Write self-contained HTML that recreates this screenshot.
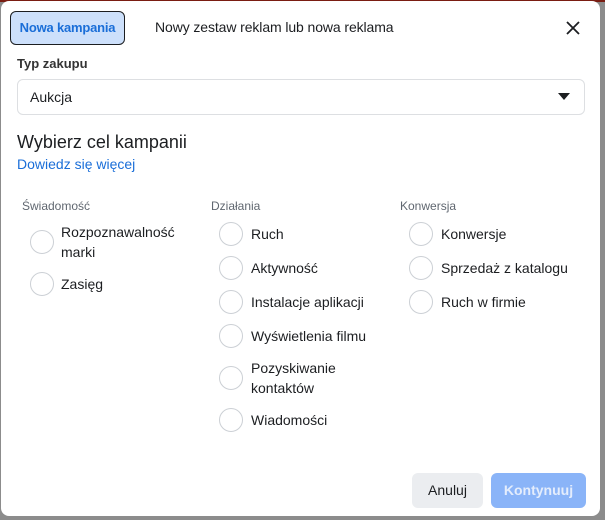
<!DOCTYPE html><html><head><style>
body{margin:0;width:605px;height:520px;background:#8c8c8c;font-family:"Liberation Sans",Arial,sans-serif;position:relative;overflow:hidden;color:#1c1e21}
.top{position:absolute;left:0;top:0;width:605px;height:2px;background:#7a1d12}
.m{position:absolute;left:1px;top:1px;width:599px;height:515px;background:#fff;border-radius:8px}
.a{position:absolute;white-space:nowrap}
.r{position:absolute;width:22px;height:22px;border:1px solid #ccd0d5;border-radius:50%;background:#fff}
.l{position:absolute;font-size:14px;line-height:20px;color:#1c1e21}
.h{position:absolute;font-size:12px;color:#606770}
</style></head><body>
<div class="top"></div>
<div class="m">
<div class="a" style="left:9px;top:10px;width:113px;height:32px;border:1.5px solid #1c1e21;border-radius:6px;background:#cde0fb;color:#1a6ed8;font-weight:bold;font-size:13px;letter-spacing:-0.2px;line-height:32px;text-align:center">Nowa kampania</div>
<div class="a" style="left:154px;top:18px;font-size:14px;letter-spacing:-0.1px">Nowy zestaw reklam lub nowa reklama</div>
<svg class="a" style="left:565px;top:20px" width="14" height="14"><path d="M1 1L13 13M13 1L1 13" stroke="#1c1e21" stroke-width="1.8"/></svg>
<div class="a" style="left:16px;top:55px;font-size:13px;font-weight:bold;color:#333">Typ zakupu</div>
<div class="a" style="left:16px;top:78px;width:566px;height:34px;border:1px solid #dddfe2;border-radius:6px"></div>
<div class="a" style="left:29px;top:88px;font-size:14px">Aukcja</div>
<svg class="a" style="left:557px;top:92px" width="12" height="7"><path d="M0 0H12L6 7Z" fill="#1c1e21"/></svg>
<div class="a" style="left:16px;top:131px;font-size:18px;color:#1c1e21">Wybierz cel kampanii</div>
<div class="a" style="left:16px;top:155px;font-size:14px;color:#1a6ed8">Dowiedz się więcej</div>
<div class="h" style="left:21px;top:198px">Świadomość</div>
<div class="h" style="left:210px;top:198px">Działania</div>
<div class="h" style="left:399px;top:198px">Konwersja</div>
<div class="r" style="left:29px;top:229px"></div><div class="l" style="left:60px;top:221px">Rozpoznawalność<br>marki</div>
<div class="r" style="left:29px;top:271px"></div><div class="l" style="left:60px;top:273px">Zasięg</div>
<div class="r" style="left:218px;top:221px"></div><div class="l" style="left:250px;top:223px">Ruch</div>
<div class="r" style="left:218px;top:255px"></div><div class="l" style="left:250px;top:257px">Aktywność</div>
<div class="r" style="left:218px;top:289px"></div><div class="l" style="left:250px;top:291px">Instalacje aplikacji</div>
<div class="r" style="left:218px;top:323px"></div><div class="l" style="left:250px;top:325px">Wyświetlenia filmu</div>
<div class="r" style="left:218px;top:365px"></div><div class="l" style="left:250px;top:357px">Pozyskiwanie<br>kontaktów</div>
<div class="r" style="left:218px;top:407px"></div><div class="l" style="left:250px;top:409px">Wiadomości</div>
<div class="r" style="left:408px;top:221px"></div><div class="l" style="left:440px;top:223px">Konwersje</div>
<div class="r" style="left:408px;top:255px"></div><div class="l" style="left:440px;top:257px">Sprzedaż z katalogu</div>
<div class="r" style="left:408px;top:289px"></div><div class="l" style="left:440px;top:291px">Ruch w firmie</div>
<div class="a" style="left:411px;top:472px;width:71px;height:35px;border-radius:6px;background:#ebedf0;font-size:14px;line-height:35px;text-align:center">Anuluj</div>
<div class="a" style="left:490px;top:472px;width:95px;height:35px;border-radius:6px;background:#8ab4f8;color:#e4edfc;font-weight:bold;font-size:14px;line-height:35px;text-align:center">Kontynuuj</div>
</div>
</body></html>
